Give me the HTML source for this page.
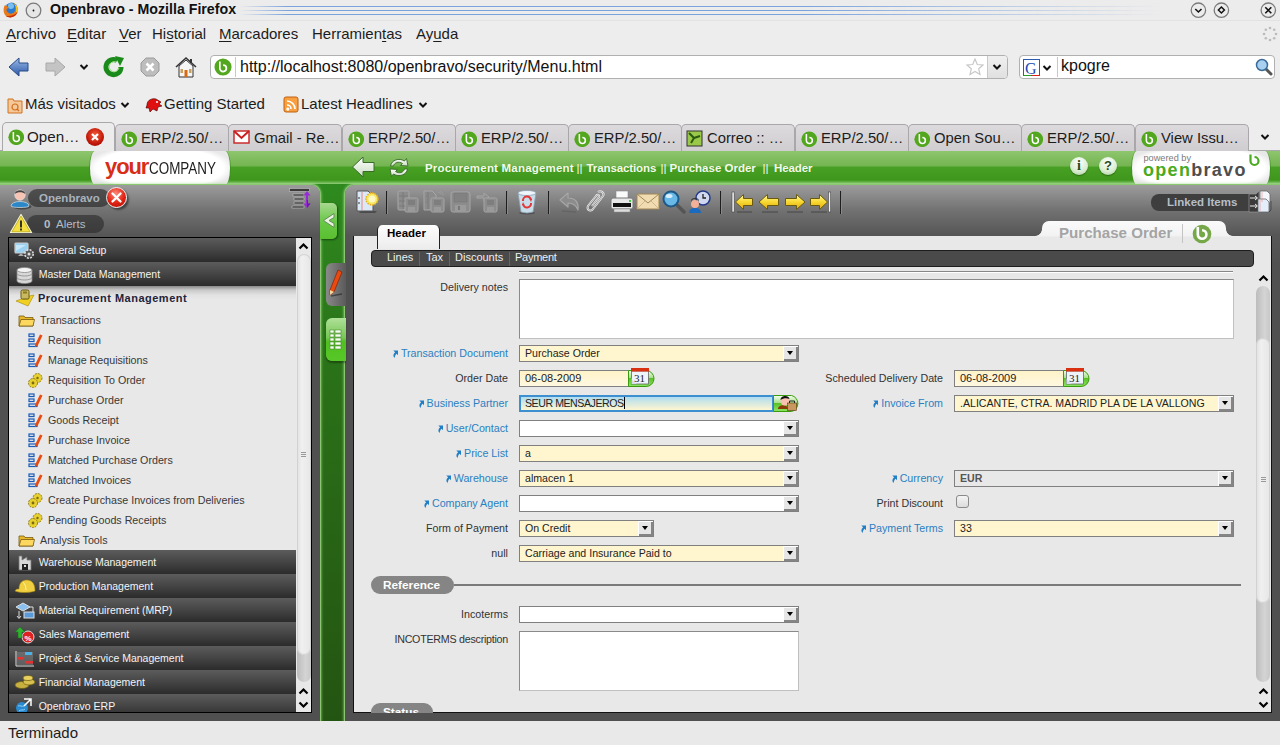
<!DOCTYPE html>
<html><head><meta charset="utf-8">
<style>
*{margin:0;padding:0;box-sizing:border-box}
html,body{width:1280px;height:745px;overflow:hidden;background:#ededed;font-family:"Liberation Sans",sans-serif}
.a{position:absolute}
.ff{font-size:15px;color:#1c1c1c;white-space:nowrap}
.u{text-decoration:underline;text-underline-offset:2px}
.tab{position:absolute;top:124px;height:27px;width:114px;background:linear-gradient(#dcdadc,#cfcdcf);border:1px solid #a9a7a9;border-bottom:none;border-radius:5px 5px 0 0}
.tab .t{position:absolute;left:25px;top:5px;font-size:14.8px;color:#1c1c1c;white-space:nowrap}
.bico{position:absolute;left:4.5px;top:5.5px;width:16.5px;height:16.5px}
</style></head>
<body>
<svg width="0" height="0" style="position:absolute"><defs><symbol id="ob" viewBox="0 0 16 16"><circle cx="8" cy="8" r="7.6" fill="#53a71f"/><path d="M5.2 3 V9.2 A2.9 2.9 0 1 0 8.1 6.3" fill="none" stroke="#fff" stroke-width="1.5"/></symbol></defs></svg>
<!-- Title bar -->
<div class="a" style="left:0;top:0;width:1280px;height:21px;background:#ececec;border-bottom:1px solid #e2e2e2"></div>
<svg class="a" style="left:1px;top:1px" width="17" height="17" viewBox="0 0 17 17"><circle cx="10.5" cy="7.5" r="6" fill="#2a7ad0"/><circle cx="10" cy="5" r="3" fill="#8ad0f8" opacity=".8"/><path d="M4 4 C2 7 2 12 5 15 C9 18 15 16 16.5 11 C17.5 7 15 3 13 2.5 C15 5 15 9 13 11.5 C10 14 6 12 5.5 9 C6 7.5 7 7 8 7 C7 6 6 5 4 4Z" fill="#e87a1a"/><path d="M5 15 C9 18 15 16 16.5 11 C14.5 14 9 15.5 5 15Z" fill="#c8300a"/><path d="M13 2.5 C15 3 17.5 7 16.5 11 L15 11 C15.5 8 15 5 13 2.5Z" fill="#f8c818"/></svg>
<svg class="a" style="left:25px;top:2px" width="17" height="17" viewBox="0 0 17 17"><circle cx="8.5" cy="8.5" r="7.3" fill="#e6e6e6" stroke="#7a7a7a" stroke-width="1.3"/><circle cx="8.5" cy="8.5" r=".9" fill="#111"/></svg>
<div class="a ff" style="left:50px;top:1px;font-weight:bold;font-size:14.2px;color:#111">Openbravo - Mozilla Firefox</div>
<div class="a" style="left:240px;top:5px;width:940px;height:11px;background:repeating-linear-gradient(#ececec 0 1px,#7aa2dc 1px 2px,#ececec 2px 4px);-webkit-mask:linear-gradient(90deg,transparent,#000 5%,#000 60%,transparent 98%)"></div>
<svg class="a" style="left:1188px;top:0px" width="92" height="21" viewBox="0 0 92 21">
<g fill="#ececec" stroke="#7a7a7a" stroke-width="1.3"><circle cx="10.4" cy="10.2" r="7.2"/><circle cx="33.4" cy="10.2" r="7.2"/><circle cx="80.3" cy="10.2" r="7.2"/></g>
<path d="M7.3 9 L10.4 12 L13.5 9" fill="none" stroke="#111" stroke-width="1.6"/>
<path d="M33.4 7 L36.4 10 L33.4 13 L30.4 10Z" fill="none" stroke="#111" stroke-width="1.5"/>
<path d="M77.3 7.2 L83.3 13.2 M83.3 7.2 L77.3 13.2" fill="none" stroke="#111" stroke-width="1.6"/>
</svg>
<!-- Menu bar -->
<div class="a ff" style="left:6px;top:25px"><span class="u">A</span>rchivo</div>
<div class="a ff" style="left:67px;top:25px"><span class="u">E</span>ditar</div>
<div class="a ff" style="left:119px;top:25px"><span class="u">V</span>er</div>
<div class="a ff" style="left:152px;top:25px">Hi<span class="u">s</span>torial</div>
<div class="a ff" style="left:219px;top:25px"><span class="u">M</span>arcadores</div>
<div class="a ff" style="left:312px;top:25px">Herramien<span class="u">t</span>as</div>
<div class="a ff" style="left:416px;top:25px">Ay<span class="u">u</span>da</div>

<!-- URL bar -->
<div class="a" style="left:210px;top:55px;width:798px;height:24px;background:#fff;border:1px solid #b0b0b0;border-radius:4px"></div>
<div class="a" style="left:235px;top:57px;width:1px;height:20px;background:#c8c8c8"></div>
<svg class="a" style="left:214px;top:58px" width="18" height="18"><use href="#ob"/></svg>
<div class="a ff" style="left:240px;top:58px;color:#111;font-size:16px">http://localhost:8080/openbravo/security/Menu.html</div>
<div class="a" style="left:987px;top:56px;width:20px;height:22px;background:linear-gradient(#f0f0f0,#e0e0e0);border-left:1px solid #c8c8c8;border-radius:0 3px 3px 0"></div>
<!-- search bar -->
<div class="a" style="left:1019px;top:55px;width:256px;height:24px;background:#fff;border:1px solid #b0b0b0;border-radius:4px"></div>
<div class="a" style="left:1057px;top:57px;width:1px;height:20px;background:#c8c8c8"></div>
<svg class="a" style="left:1023px;top:59px" width="17" height="17" viewBox="0 0 17 17"><rect x="0.5" y="0.5" width="16" height="16" fill="#fff" stroke="#2a5ab0"/><path d="M0.5 16.5 H16.5 V0.5" fill="none" stroke="#d82020"/><path d="M0.5 16.5 H8" stroke="#2a9a2a"/><text x="2" y="14.5" font-family="Liberation Serif" font-size="16" fill="#1a4ab8">G</text></svg>

<div class="a ff" style="left:1061px;top:57px;color:#111;font-size:16px">kpogre</div>
<!-- Nav toolbar -->

<svg class="a" style="left:8px;top:57px" width="22" height="20" viewBox="0 0 22 20"><defs><linearGradient id="bg1" x1="0" y1="0" x2="0" y2="1"><stop offset="0" stop-color="#9cbce8"/><stop offset="1" stop-color="#2a58a8"/></linearGradient></defs><path d="M1 10 L11 1 V6 H20 V14 H11 V19Z" fill="url(#bg1)" stroke="#2a4a88" stroke-width="1" stroke-linejoin="round"/></svg>
<svg class="a" style="left:44px;top:57px" width="22" height="20" viewBox="0 0 22 20"><path d="M21 10 L11 1 V6 H2 V14 H11 V19Z" fill="#c4c4c4" stroke="#a8a8a8" stroke-width="1" stroke-linejoin="round"/></svg>
<svg class="a" style="left:79px;top:63px" width="10" height="8"><path d="M1.5 2 L5 5.5 L8.5 2" fill="none" stroke="#111" stroke-width="2"/></svg>
<svg class="a" style="left:103px;top:56px" width="22" height="22" viewBox="0 0 22 22"><path d="M18 11 A7.5 7.5 0 1 1 14 4.5" fill="none" stroke="#1a8a1a" stroke-width="5"/><path d="M12 0 L21 2 L17 10Z" fill="#1a8a1a"/><path d="M16 12 A5 5 0 1 1 13 6" fill="none" stroke="#9ae07a" stroke-width="1"/></svg>
<svg class="a" style="left:140px;top:57px" width="20" height="20" viewBox="0 0 20 20"><path d="M6 1 H14 L19 6 V14 L14 19 H6 L1 14 V6Z" fill="#bdbdbd" stroke="#9a9a9a"/><path d="M6.5 6.5 L13.5 13.5 M13.5 6.5 L6.5 13.5" stroke="#fff" stroke-width="2.6"/></svg>
<svg class="a" style="left:175px;top:56px" width="22" height="22" viewBox="0 0 22 22"><path d="M1 11 L11 2 L21 11" fill="none" stroke="#333" stroke-width="1.6"/><path d="M4 10 L11 4 L18 10 V21 H4Z" fill="#f6f6f6" stroke="#333" stroke-width="1"/><rect x="9.5" y="14" width="3" height="7" fill="#d86a10"/><rect x="5.5" y="13" width="2.5" height="4" fill="#c8a060"/><rect x="14" y="13" width="2.5" height="4" fill="#c8a060"/><rect x="15" y="3" width="2" height="4" fill="#333"/></svg>
<!-- URL dropdown chevron & star -->
<svg class="a" style="left:992px;top:63px" width="10" height="8"><path d="M1.5 2 L5 5.5 L8.5 2" fill="none" stroke="#111" stroke-width="2"/></svg>
<svg class="a" style="left:966px;top:58px" width="18" height="18" viewBox="0 0 18 18"><path d="M9 1 L11.3 6.5 L17 7 L12.7 10.8 L14 16.5 L9 13.5 L4 16.5 L5.3 10.8 L1 7 L6.7 6.5Z" fill="#fff" stroke="#c8c8c8" stroke-width="1.2"/></svg>
<svg class="a" style="left:1042px;top:64px" width="10" height="8"><path d="M1.5 2 L5 5.5 L8.5 2" fill="none" stroke="#111" stroke-width="2"/></svg>
<svg class="a" style="left:1255px;top:58px" width="18" height="18" viewBox="0 0 18 18"><path d="M11 11 L16 16" stroke="#555" stroke-width="3" stroke-linecap="round"/><circle cx="7" cy="7" r="5.5" fill="#a8d0f0" stroke="#3a6a98" stroke-width="1.5"/></svg>
<!-- throbber -->
<svg class="a" style="left:1262px;top:26px" width="16" height="16" viewBox="0 0 16 16"><g fill="#bbb"><circle cx="8" cy="2" r="1.3"/><circle cx="12.2" cy="3.8" r="1.3"/><circle cx="14" cy="8" r="1.3"/><circle cx="12.2" cy="12.2" r="1.3"/><circle cx="8" cy="14" r="1.3"/><circle cx="3.8" cy="12.2" r="1.3"/><circle cx="2" cy="8" r="1.3"/><circle cx="3.8" cy="3.8" r="1.3"/></g></svg>
<!-- bookmarks icons -->
<svg class="a" style="left:7px;top:97px" width="16" height="17" viewBox="0 0 16 17"><path d="M1 2 H6 L7 4 H15 V16 H1Z" fill="#f4c898" stroke="#d07020" stroke-width="1"/><circle cx="8" cy="10" r="3" fill="none" stroke="#d07020" stroke-width="1.2"/><path d="M10 12 L12 14" stroke="#d07020" stroke-width="1.4"/></svg>
<svg class="a" style="left:120px;top:101px" width="10" height="8"><path d="M1.5 2 L5 5.5 L8.5 2" fill="none" stroke="#111" stroke-width="2"/></svg>
<svg class="a" style="left:145px;top:97px" width="18" height="16" viewBox="0 0 18 16"><path d="M2 8 C2 3 7 1 11 2 L16 5 L14 7 L17 9 L13 10 L12 14 L8 12 L5 15 L4 11 L1 11Z" fill="#e01010" stroke="#400" stroke-width=".6"/><circle cx="12" cy="5" r="1" fill="#fff"/></svg>
<svg class="a" style="left:283px;top:96px" width="16" height="17" viewBox="0 0 16 17"><rect x="1" y="1" width="14" height="15" rx="2" fill="#f8a040" stroke="#c06010"/><path d="M4 13 A0.8 0.8 0 1 1 4 13.1 M4 9 A4 4 0 0 1 8 13 M4 5 A8 8 0 0 1 12 13" fill="none" stroke="#fff" stroke-width="1.6"/></svg>
<svg class="a" style="left:418px;top:101px" width="10" height="8"><path d="M1.5 2 L5 5.5 L8.5 2" fill="none" stroke="#111" stroke-width="2"/></svg>
<!-- tab close & tab list --><div style="position:absolute;left:0;top:0;z-index:5">
<div class="a" style="left:86px;top:128px;width:18px;height:18px;border-radius:50%;background:radial-gradient(circle at 50% 40%,#f86040,#c01808 60%,#900);"></div>
<svg class="a" style="left:86px;top:128px" width="18" height="18"><path d="M6 6 L12 12 M12 6 L6 12" stroke="#fff" stroke-width="2.2"/></svg>
<svg class="a" style="left:1260px;top:133px" width="10" height="8"><path d="M1.5 2 L5 5.5 L8.5 2" fill="none" stroke="#111" stroke-width="2"/></svg>
<svg class="a" style="left:233px;top:130px" width="17" height="14" viewBox="0 0 17 14"><rect x="1" y="1" width="15" height="12" fill="#fff" stroke="#c82020" stroke-width="1.4"/><path d="M1 1 L8.5 8 L16 1" fill="none" stroke="#c82020" stroke-width="2"/></svg>
<svg class="a" style="left:686px;top:130px" width="17" height="17" viewBox="0 0 17 17"><rect x="1" y="1" width="15" height="15" fill="#9ac848" stroke="#333"/><path d="M3 3 L8 8 L5 13 M8 8 L14 6" stroke="#2a5a10" stroke-width="2" fill="none"/></svg></div>


<!-- Bookmarks -->
<div class="a ff" style="left:25px;top:95px">Más visitados</div>
<div class="a ff" style="left:164px;top:95px">Getting Started</div>
<div class="a ff" style="left:301px;top:95px">Latest Headlines</div>

<!-- Tabs -->
<div class="a" style="left:0;top:150px;width:1280px;height:1px;background:#a9a7a9"></div>
<div class="a" style="left:2px;top:122px;height:30px;width:113px;background:#ececec;border:1px solid #a9a7a9;border-bottom:none;border-radius:5px 5px 0 0"><svg class="bico"><use href="#ob"/></svg><div class="t" style="position:absolute;left:24px;top:5px;font-size:15.2px;color:#1c1c1c">Open…</div></div>
<div class="tab" style="left:115px"><svg class="bico"><use href="#ob"/></svg><div class="t">ERP/2.50/…</div></div>
<div class="tab" style="left:228px"><div class="t">Gmail - Re…</div></div>
<div class="tab" style="left:342px"><svg class="bico"><use href="#ob"/></svg><div class="t">ERP/2.50/…</div></div>
<div class="tab" style="left:455px"><svg class="bico"><use href="#ob"/></svg><div class="t">ERP/2.50/…</div></div>
<div class="tab" style="left:568px"><svg class="bico"><use href="#ob"/></svg><div class="t">ERP/2.50/…</div></div>
<div class="tab" style="left:681px"><div class="t">Correo :: …</div></div>
<div class="tab" style="left:795px"><svg class="bico"><use href="#ob"/></svg><div class="t">ERP/2.50/…</div></div>
<div class="tab" style="left:908px"><svg class="bico"><use href="#ob"/></svg><div class="t">Open Sou…</div></div>
<div class="tab" style="left:1021px"><svg class="bico"><use href="#ob"/></svg><div class="t">ERP/2.50/…</div></div>
<div class="tab" style="left:1135px"><svg class="bico"><use href="#ob"/></svg><div class="t">View Issu…</div></div>

<!-- APP -->

<!-- green header -->
<div class="a" style="left:0;top:151px;width:1280px;height:34px;background:linear-gradient(#8ec66e 0px,#74b450 15px,#48a024 16px,#3e961c 29px,#62b044 31px,#a8dc98 34px)"></div>
<!-- dark green under panels -->
<div class="a" style="left:0;top:184px;width:1280px;height:537px;background:linear-gradient(#2e8a1e,#2a7018 200px,#245412 537px)"></div>
<!-- logo pill -->
<div class="a" style="left:89px;top:151px;width:142px;height:34px;background:#3a8a20;border-radius:6px/17px;opacity:.6"></div>
<div class="a" style="left:90px;top:151px;width:140px;height:34px;background:radial-gradient(ellipse 75px 24px at 50% 50%,#fff 85%,#e8e8e8 100%);border-radius:5px/17px"></div>
<div class="a" style="left:105px;top:154px;font-size:22px;font-weight:bold;color:#d82e18;letter-spacing:-1.1px;white-space:nowrap;line-height:25px">your</div>
<div class="a" style="left:149px;top:159px;font-size:16px;color:#1e1e1e;white-space:nowrap;line-height:20px;transform:scaleX(.84);transform-origin:0 0">COMPANY</div>
<!-- back/refresh -->
<svg class="a" style="left:351px;top:155px" width="26" height="24" viewBox="0 0 26 24"><defs><linearGradient id="ga" x1="0" y1="0" x2="0" y2="1"><stop offset="0" stop-color="#ffffff"/><stop offset="1" stop-color="#c8dcc0"/></linearGradient></defs><path d="M1.5 12 L12 2 V7.5 H23 V16.5 H12 V22Z" fill="url(#ga)" stroke="#3a6a2a" stroke-width="1" stroke-linejoin="round"/></svg>
<svg class="a" style="left:387px;top:156px" width="24" height="23" viewBox="0 0 24 23"><g fill="url(#ga)" stroke="#3a6a2a" stroke-width=".9" stroke-linejoin="round"><path d="M3.5 10 C4.5 4 12 1.5 17.5 5 L19.5 2.5 L21 10 L13.5 9.5 L15.5 7.5 C11.5 5 7.5 6.5 6.5 10Z"/><path d="M20.5 13 C19.5 19 12 21.5 6.5 18 L4.5 20.5 L3 13 L10.5 13.5 L8.5 15.5 C12.5 18 16.5 16.5 17.5 13Z"/></g></svg>
<div style="position:absolute;top:162px;font:bold 11.5px 'Liberation Sans',sans-serif;color:#f4f8ec;white-space:nowrap;left:425px;letter-spacing:.2px">Procurement Management</div><div style="position:absolute;top:162px;font:11.5px 'Liberation Sans',sans-serif;color:#f4f8ec;white-space:nowrap;left:576.5px">||</div><div style="position:absolute;top:162px;font:bold 11.5px 'Liberation Sans',sans-serif;color:#f4f8ec;white-space:nowrap;left:586.5px;letter-spacing:-.1px">Transactions</div><div style="position:absolute;top:162px;font:11.5px 'Liberation Sans',sans-serif;color:#f4f8ec;white-space:nowrap;left:660.5px">||</div><div style="position:absolute;top:162px;font:bold 11.5px 'Liberation Sans',sans-serif;color:#f4f8ec;white-space:nowrap;left:669.5px">Purchase Order</div><div style="position:absolute;top:162px;font:11.5px 'Liberation Sans',sans-serif;color:#f4f8ec;white-space:nowrap;left:762.5px">||</div><div style="position:absolute;top:162px;font:bold 11.5px 'Liberation Sans',sans-serif;color:#f4f8ec;white-space:nowrap;left:774px;letter-spacing:-.1px">Header</div>
<!-- info/help -->
<div class="a" style="left:1070px;top:157px;width:18px;height:18px;border-radius:50%;background:radial-gradient(circle at 50% 30%,#fff,#d8ecd0 60%,#9cc090);box-shadow:0 1px 1px #2a6a10;font:bold 14px 'Liberation Serif',serif;color:#2a4a1a;text-align:center;line-height:18px">i</div>
<div class="a" style="left:1099px;top:157px;width:18px;height:18px;border-radius:50%;background:radial-gradient(circle at 50% 30%,#fff,#d8ecd0 60%,#9cc090);box-shadow:0 1px 1px #2a6a10;font:bold 13px 'Liberation Sans',sans-serif;color:#2a4a1a;text-align:center;line-height:18px">?</div>
<!-- powered by pill -->
<div class="a" style="left:1131px;top:151px;width:140px;height:34px;background:#3a8a20;border-radius:6px/17px;opacity:.6"></div>
<div class="a" style="left:1132px;top:151px;width:138px;height:34px;background:radial-gradient(ellipse 75px 24px at 50% 50%,#fff 85%,#e8e8e8 100%);border-radius:5px/17px"></div>
<div class="a" style="left:1143.5px;top:153px;font-size:9.2px;color:#7a7a7a;white-space:nowrap;line-height:11px">powered by</div>
<div class="a" style="left:1143px;top:159px;font-size:18px;font-weight:bold;color:#4aaa22;white-space:nowrap;letter-spacing:1.3px;line-height:22px">open<span style="color:#4e4e4e">bravo</span></div>
<svg class="a" style="left:1246px;top:153px" width="15" height="14" viewBox="0 0 15 14"><path d="M4.5 1.5 V8 A4 4 0 1 0 8.5 4" fill="none" stroke="#4aaa22" stroke-width="2.2"/></svg>
<!-- LEFT PANEL -->
<div class="a" style="left:0;top:185px;width:320px;height:536px;background:linear-gradient(#9c9c9c,#727272 25px,#565656 50px,#505050 80px);border-radius:0 9px 0 0;box-shadow:0 0 0 1px #8ac870,0 0 3px 1px #a8dc90"></div>
<!-- MAIN PANEL -->
<div class="a" style="left:345px;top:185px;width:935px;height:536px;background:linear-gradient(#9c9c9c,#727272 25px,#565656 50px,#505050 80px);border-radius:9px 0 0 0;box-shadow:0 0 0 1px #8ac870,0 0 3px 1px #a8dc90"></div>
<!-- green collapse tab -->
<div class="a" style="left:320px;top:203px;width:17px;height:36px;background:linear-gradient(#a8d890,#6ac848 50%,#5ac030);border-radius:0 5px 5px 0;box-shadow:1px 1px 2px #1a4a10"></div>
<svg class="a" style="left:321px;top:212px" width="15" height="17" viewBox="0 0 15 17"><path d="M13 1.5 L2.5 8.5 L13 15.5 L13 11.5 L8 8.5 L13 5.5Z" fill="#e8f4e0" stroke="#6a8a60" stroke-width="1" stroke-linejoin="round"/></svg>




<!-- side tabs on main panel -->
<div class="a" style="left:326px;top:263px;width:20px;height:43px;background:linear-gradient(90deg,#8a8a8a,#5a5a5a);border-radius:6px 0 0 6px"></div>
<svg class="a" style="left:328px;top:268px" width="16" height="32" viewBox="0 0 16 32"><path d="M3 28 L14 26" stroke="#222" stroke-width="1.5" opacity=".6"/><path d="M10 2 L14 4 L6 24 L2 27 L2 22Z" fill="#e84a10" stroke="#8a2008" stroke-width=".7"/><path d="M2 22 L6 24 L2 27Z" fill="#f0d8a0"/></svg>
<div class="a" style="left:326px;top:318px;width:20px;height:43px;background:linear-gradient(#b0e098,#78c858 45%,#50c020 55%,#58c828);border-radius:6px 0 0 6px;box-shadow:0 2px 2px rgba(0,0,0,.35)"></div>
<svg class="a" style="left:329px;top:329px" width="13" height="21" viewBox="0 0 13 21"><g fill="#f4fff0" stroke="#4a8a30" stroke-width=".6"><rect x="1" y="1" width="4" height="3"/><rect x="6" y="1" width="6" height="3"/><rect x="1" y="5" width="4" height="3"/><rect x="6" y="5" width="6" height="3"/><rect x="1" y="9" width="4" height="3"/><rect x="6" y="9" width="6" height="3"/><rect x="1" y="13" width="4" height="3"/><rect x="6" y="13" width="6" height="3"/><rect x="1" y="17" width="4" height="3"/><rect x="6" y="17" width="6" height="3"/></g></svg>

<!-- SIDEBAR CONTENT -->
<!-- user -->
<div class="a" style="left:28px;top:189px;width:82px;height:18px;border-radius:9px;background:rgba(35,35,35,.62)"></div>
<div class="a" style="left:39px;top:192px;font:bold 11.5px 'Liberation Sans',sans-serif;color:#a9b2bc;white-space:nowrap">Openbravo</div>
<svg class="a" style="left:10px;top:187px" width="23" height="23" viewBox="0 0 23 23"><ellipse cx="12" cy="19.5" rx="9.5" ry="3" fill="#222" opacity=".55"/><path d="M1 19 C1 13 19 13 19 19 C19 21 1 21 1 19Z" fill="#2a88c8" stroke="#e0e0e0" stroke-width=".7"/><circle cx="10" cy="8" r="5.3" fill="#f6c4b4" stroke="#ddd" stroke-width=".6"/><path d="M4.8 7 C5 2 15 2 15.2 7 C13 4.5 7 4.5 4.8 7Z" fill="#444"/></svg>
<div class="a" style="left:106px;top:187px;width:21px;height:21px;border-radius:50%;background:radial-gradient(circle at 45% 30%,#ff8a7a,#e02010 55%,#a81008);border:1px solid #eee;box-shadow:2px 2px 2px rgba(0,0,0,.45)"></div>
<svg class="a" style="left:106px;top:187px" width="21" height="21"><path d="M6.5 6.5 L14.5 14.5 M14.5 6.5 L6.5 14.5" stroke="#fff" stroke-width="2.4" stroke-linecap="round"/></svg>
<!-- sort icon -->
<svg class="a" style="left:288px;top:187px" width="24" height="24" viewBox="0 0 24 24"><g fill="#3a3a3a" stroke="#c8c8c8" stroke-width=".6"><rect x="1.5" y="1.5" width="20" height="3"/><rect x="5" y="7" width="11" height="2"/><rect x="6" y="11" width="10" height="2"/><rect x="6" y="15" width="10" height="2"/><rect x="4" y="19" width="12" height="2"/></g><path d="M19 4 L15.5 8.5 H18 V16.5 H15.5 L19 21 L22.5 16.5 H20 V8.5 H22.5Z" fill="#9a2ad8"/><path d="M19 13 L19 21 L22.5 16.5 H20 V13Z" fill="#6a1aa8"/></svg>
<!-- alerts -->
<div class="a" style="left:27px;top:215px;width:77px;height:18px;border-radius:9px;background:rgba(35,35,35,.55)"></div>
<svg class="a" style="left:9px;top:213px" width="24" height="21" viewBox="0 0 24 21"><path d="M12 1.5 L22.5 19.5 H1.5 Z" fill="#f4e040" stroke="#f8f4d0" stroke-width="1.2" stroke-linejoin="round"/><path d="M12 3 L21 18.8 H3 Z" fill="none" stroke="#a8981a" stroke-width=".6"/><rect x="11" y="7.5" width="2" height="7" fill="#333"/><rect x="11" y="15.5" width="2" height="2" fill="#333"/></svg>
<div class="a" style="left:44px;top:218px;font:bold 11.5px 'Liberation Sans',sans-serif;color:#b4bcc4">0</div>
<div class="a" style="left:56px;top:218px;font:11.5px 'Liberation Sans',sans-serif;color:#b4bcc4">Alerts</div>

<!-- list box -->
<div class="a" style="left:8px;top:237px;width:304px;height:476px;border:1px solid #000;background:#e8e8e8;overflow:hidden">
<div class="a" style="left:0;top:0px;width:287px;height:24px;background:linear-gradient(#5c5c5c,#474747 45%,#2b2b2b)"></div><svg class="a" style="left:5px;top:4px" width="21" height="18" viewBox="0 0 21 18"><rect x="1" y="1" width="13" height="10" rx="1" fill="#9ad0f0" stroke="#ccc" stroke-width="1.2"/><path d="M2 3 L12 3 L2 9Z" fill="#d8f0fc" opacity=".7"/><path d="M4 14 H10 L7 11Z" fill="#aaa"/><circle cx="15" cy="12" r="4.2" fill="#555" stroke="#ddd" stroke-width="1.6" stroke-dasharray="2 1.3"/><circle cx="15" cy="12" r="1.5" fill="#ddd"/></svg><div class="a" style="left:29.7px;top:6px;font:10.5px 'Liberation Sans',sans-serif;color:#f4f4f4;white-space:nowrap">General Setup</div>
<div class="a" style="left:0;top:24px;width:287px;height:24px;background:linear-gradient(#5c5c5c,#474747 45%,#2b2b2b)"></div><svg class="a" style="left:6px;top:28px" width="19" height="18" viewBox="0 0 19 18"><g fill="#d8d8d8" stroke="#888" stroke-width=".8"><path d="M2 12 V15 A7.5 2.5 0 0 0 17 15 V12"/><path d="M2 8 V11.5 A7.5 2.5 0 0 0 17 11.5 V8"/><path d="M2 4 V7.5 A7.5 2.5 0 0 0 17 7.5 V4"/><ellipse cx="9.5" cy="4" rx="7.5" ry="2.5" fill="#f4f4f4"/></g></svg><div class="a" style="left:29.7px;top:30px;font:10.5px 'Liberation Sans',sans-serif;color:#f4f4f4;white-space:nowrap">Master Data Management</div>
<div class="a" style="left:0;top:312px;width:287px;height:24px;background:linear-gradient(#5c5c5c,#474747 45%,#2b2b2b)"></div><svg class="a" style="left:8px;top:316px" width="16" height="18" viewBox="0 0 16 18"><path d="M2 2 H5 V6 L10 3 V6 H14 V16 H2Z" fill="#d8d8d8" stroke="#777" stroke-width=".8"/><rect x="5" y="10" width="6" height="6" fill="#222"/><rect x="7" y="11" width="2" height="2" fill="#ddd"/></svg><div class="a" style="left:29.7px;top:318px;font:10.5px 'Liberation Sans',sans-serif;color:#f4f4f4;white-space:nowrap">Warehouse Management</div>
<div class="a" style="left:0;top:336px;width:287px;height:24px;background:linear-gradient(#5c5c5c,#474747 45%,#2b2b2b)"></div><svg class="a" style="left:5px;top:340px" width="22" height="16" viewBox="0 0 22 16"><path d="M1 13 C2 11 3 11 5 11 C5 4 9 2 13 2 C18 2 21 6 21 12 L21 13 C15 15 6 15 1 13Z" fill="#f0d040" stroke="#a08010" stroke-width=".6"/><path d="M9 4 C11 6 12 9 12 12" stroke="#fff4a0" fill="none"/></svg><div class="a" style="left:29.7px;top:342px;font:10.5px 'Liberation Sans',sans-serif;color:#f4f4f4;white-space:nowrap">Production Management</div>
<div class="a" style="left:0;top:360px;width:287px;height:24px;background:linear-gradient(#5c5c5c,#474747 45%,#2b2b2b)"></div><svg class="a" style="left:5px;top:364px" width="22" height="18" viewBox="0 0 22 18"><path d="M9 1 L16 5 L9 9 L2 5Z" fill="#8ac0f0" stroke="#ddd" stroke-width="1"/><path d="M5 9 V16 M3 14 L5 16.5 L7 14" stroke="#ddd" fill="none" stroke-width="1"/><path d="M16 5 H19 V10" stroke="#ddd" fill="none"/><rect x="10" y="10" width="10" height="6" fill="#5a9ad8" stroke="#ddd" stroke-width="1"/></svg><div class="a" style="left:29.7px;top:366px;font:10.5px 'Liberation Sans',sans-serif;color:#f4f4f4;white-space:nowrap">Material Requirement (MRP)</div>
<div class="a" style="left:0;top:384px;width:287px;height:24px;background:linear-gradient(#5c5c5c,#474747 45%,#2b2b2b)"></div><svg class="a" style="left:5px;top:388px" width="22" height="18" viewBox="0 0 22 18"><circle cx="14" cy="11" r="6" fill="#e02020" stroke="#ddd" stroke-width="1"/><text x="10.5" y="14.5" font-size="8" font-family="Liberation Sans" font-weight="bold" fill="#fff">%</text><path d="M6 1 L11 6 H8 V12 H4 V6 H1Z" fill="#30b030" stroke="#1a6a1a" stroke-width=".5"/></svg><div class="a" style="left:29.7px;top:390px;font:10.5px 'Liberation Sans',sans-serif;color:#f4f4f4;white-space:nowrap">Sales Management</div>
<div class="a" style="left:0;top:408px;width:287px;height:24px;background:linear-gradient(#5c5c5c,#474747 45%,#2b2b2b)"></div><svg class="a" style="left:5px;top:412px" width="21" height="18" viewBox="0 0 21 18"><path d="M2 1 V16 H20" stroke="#ddd" fill="none" stroke-width="1"/><rect x="3" y="2" width="16" height="13" fill="#888" opacity=".5"/><rect x="11" y="2" width="7" height="3" fill="#4ab0e8"/><rect x="3" y="7" width="7" height="2.5" fill="#e83030"/><rect x="11" y="11" width="8" height="2.5" fill="#e83030"/></svg><div class="a" style="left:29.7px;top:414px;font:10.5px 'Liberation Sans',sans-serif;color:#f4f4f4;white-space:nowrap">Project &amp; Service Management</div>
<div class="a" style="left:0;top:432px;width:287px;height:24px;background:linear-gradient(#5c5c5c,#474747 45%,#2b2b2b)"></div><svg class="a" style="left:5px;top:436px" width="22" height="16" viewBox="0 0 22 16"><ellipse cx="8" cy="11" rx="7" ry="3.5" fill="#c8b040" stroke="#6a5a10" stroke-width=".7"/><ellipse cx="15" cy="8" rx="6" ry="3" fill="#d8c050" stroke="#6a5a10" stroke-width=".7"/><ellipse cx="14" cy="4" rx="5" ry="2.5" fill="#e8d060" stroke="#6a5a10" stroke-width=".7"/></svg><div class="a" style="left:29.7px;top:438px;font:10.5px 'Liberation Sans',sans-serif;color:#f4f4f4;white-space:nowrap">Financial Management</div>
<div class="a" style="left:0;top:456px;width:287px;height:24px;background:linear-gradient(#5c5c5c,#474747 45%,#2b2b2b)"></div><svg class="a" style="left:6px;top:460px" width="18" height="16" viewBox="0 0 18 16"><circle cx="7" cy="10" r="6" fill="#2a8ad0"/><path d="M3 8 C5 7 7 9 9 8 M4 13 C6 11 8 13 10 11" stroke="#8ad0f8" fill="none"/><path d="M9 1 H16 V8 M16 1 L9 8" stroke="#fff" stroke-width="1.5" fill="none"/></svg><div class="a" style="left:29.7px;top:462px;font:10.5px 'Liberation Sans',sans-serif;color:#f4f4f4;white-space:nowrap">Openbravo ERP</div>
<div class="a" style="left:0;top:48px;width:287px;height:24px;background:linear-gradient(#8a8a8a 0px,#c8c8c8 4px,#e2e2e2 9px,#e8e8e8 14px)"></div><svg class="a" style="left:6px;top:51px" width="20" height="18" viewBox="0 0 20 18"><path d="M1 12 L13 17 L19 6 L14 7 L14 10 L6 10Z" fill="#f0d020" stroke="#a08810" stroke-width=".6"/><rect x="6" y="1" width="8" height="9" rx="1.5" fill="#c8b860" stroke="#6a5a10"/><rect x="8" y="2.5" width="4" height="2" fill="#8a7a20"/></svg><div class="a" style="left:29px;top:54px;font:bold 11px 'Liberation Sans',sans-serif;letter-spacing:.5px;color:#23233a;white-space:nowrap">Procurement Management</div>
<svg class="a" style="left:9px;top:76px" width="17" height="13" viewBox="0 0 17 13"><path d="M1 2 H6 L7 3.5 H15 V12 H1Z" fill="#e8b828" stroke="#7a5a10" stroke-width=".8"/><path d="M1 12 L3 5.5 H16.5 L15 12Z" fill="#fcd860" stroke="#7a5a10" stroke-width=".8"/></svg><div class="a" style="left:31px;top:76px;font:10.7px 'Liberation Sans',sans-serif;color:#383838;white-space:nowrap">Transactions</div>
<svg class="a" style="left:19px;top:95px" width="16" height="15" viewBox="0 0 16 15"><g fill="none" stroke="#1a5ab8" stroke-width="1.2"><rect x="1" y="1" width="5" height="2.5"/><rect x="1" y="6" width="5" height="2.5"/><rect x="1" y="11" width="8" height="2.5"/></g><path d="M7 12 L12 1.5 L14.5 2.5 L9.5 13 L7 14Z" fill="#e84a10"/></svg><div class="a" style="left:39px;top:96px;font:10.7px 'Liberation Sans',sans-serif;color:#383838;white-space:nowrap">Requisition</div>
<svg class="a" style="left:19px;top:115px" width="16" height="15" viewBox="0 0 16 15"><g fill="none" stroke="#1a5ab8" stroke-width="1.2"><rect x="1" y="1" width="5" height="2.5"/><rect x="1" y="6" width="5" height="2.5"/><rect x="1" y="11" width="8" height="2.5"/></g><path d="M7 12 L12 1.5 L14.5 2.5 L9.5 13 L7 14Z" fill="#e84a10"/></svg><div class="a" style="left:39px;top:116px;font:10.7px 'Liberation Sans',sans-serif;color:#383838;white-space:nowrap">Manage Requisitions</div>
<svg class="a" style="left:18px;top:134px" width="17" height="17" viewBox="0 0 17 17"><circle cx="10.5" cy="6" r="4.5" fill="#e8d030" stroke="#7a6a10" stroke-width=".8" stroke-dasharray="2 1"/><circle cx="6" cy="11" r="4.5" fill="#e8d030" stroke="#7a6a10" stroke-width=".8" stroke-dasharray="2 1"/><circle cx="6" cy="11" r="1.4" fill="#7a6a10"/><circle cx="10.5" cy="6" r="1.2" fill="#7a6a10"/></svg><div class="a" style="left:39px;top:136px;font:10.7px 'Liberation Sans',sans-serif;color:#383838;white-space:nowrap">Requisition To Order</div>
<svg class="a" style="left:19px;top:155px" width="16" height="15" viewBox="0 0 16 15"><g fill="none" stroke="#1a5ab8" stroke-width="1.2"><rect x="1" y="1" width="5" height="2.5"/><rect x="1" y="6" width="5" height="2.5"/><rect x="1" y="11" width="8" height="2.5"/></g><path d="M7 12 L12 1.5 L14.5 2.5 L9.5 13 L7 14Z" fill="#e84a10"/></svg><div class="a" style="left:39px;top:156px;font:10.7px 'Liberation Sans',sans-serif;color:#383838;white-space:nowrap">Purchase Order</div>
<svg class="a" style="left:19px;top:175px" width="16" height="15" viewBox="0 0 16 15"><g fill="none" stroke="#1a5ab8" stroke-width="1.2"><rect x="1" y="1" width="5" height="2.5"/><rect x="1" y="6" width="5" height="2.5"/><rect x="1" y="11" width="8" height="2.5"/></g><path d="M7 12 L12 1.5 L14.5 2.5 L9.5 13 L7 14Z" fill="#e84a10"/></svg><div class="a" style="left:39px;top:176px;font:10.7px 'Liberation Sans',sans-serif;color:#383838;white-space:nowrap">Goods Receipt</div>
<svg class="a" style="left:19px;top:195px" width="16" height="15" viewBox="0 0 16 15"><g fill="none" stroke="#1a5ab8" stroke-width="1.2"><rect x="1" y="1" width="5" height="2.5"/><rect x="1" y="6" width="5" height="2.5"/><rect x="1" y="11" width="8" height="2.5"/></g><path d="M7 12 L12 1.5 L14.5 2.5 L9.5 13 L7 14Z" fill="#e84a10"/></svg><div class="a" style="left:39px;top:196px;font:10.7px 'Liberation Sans',sans-serif;color:#383838;white-space:nowrap">Purchase Invoice</div>
<svg class="a" style="left:19px;top:215px" width="16" height="15" viewBox="0 0 16 15"><g fill="none" stroke="#1a5ab8" stroke-width="1.2"><rect x="1" y="1" width="5" height="2.5"/><rect x="1" y="6" width="5" height="2.5"/><rect x="1" y="11" width="8" height="2.5"/></g><path d="M7 12 L12 1.5 L14.5 2.5 L9.5 13 L7 14Z" fill="#e84a10"/></svg><div class="a" style="left:39px;top:216px;font:10.7px 'Liberation Sans',sans-serif;color:#383838;white-space:nowrap">Matched Purchase Orders</div>
<svg class="a" style="left:19px;top:235px" width="16" height="15" viewBox="0 0 16 15"><g fill="none" stroke="#1a5ab8" stroke-width="1.2"><rect x="1" y="1" width="5" height="2.5"/><rect x="1" y="6" width="5" height="2.5"/><rect x="1" y="11" width="8" height="2.5"/></g><path d="M7 12 L12 1.5 L14.5 2.5 L9.5 13 L7 14Z" fill="#e84a10"/></svg><div class="a" style="left:39px;top:236px;font:10.7px 'Liberation Sans',sans-serif;color:#383838;white-space:nowrap">Matched Invoices</div>
<svg class="a" style="left:18px;top:254px" width="17" height="17" viewBox="0 0 17 17"><circle cx="10.5" cy="6" r="4.5" fill="#e8d030" stroke="#7a6a10" stroke-width=".8" stroke-dasharray="2 1"/><circle cx="6" cy="11" r="4.5" fill="#e8d030" stroke="#7a6a10" stroke-width=".8" stroke-dasharray="2 1"/><circle cx="6" cy="11" r="1.4" fill="#7a6a10"/><circle cx="10.5" cy="6" r="1.2" fill="#7a6a10"/></svg><div class="a" style="left:39px;top:256px;font:10.7px 'Liberation Sans',sans-serif;color:#383838;white-space:nowrap">Create Purchase Invoices from Deliveries</div>
<svg class="a" style="left:18px;top:274px" width="17" height="17" viewBox="0 0 17 17"><circle cx="10.5" cy="6" r="4.5" fill="#e8d030" stroke="#7a6a10" stroke-width=".8" stroke-dasharray="2 1"/><circle cx="6" cy="11" r="4.5" fill="#e8d030" stroke="#7a6a10" stroke-width=".8" stroke-dasharray="2 1"/><circle cx="6" cy="11" r="1.4" fill="#7a6a10"/><circle cx="10.5" cy="6" r="1.2" fill="#7a6a10"/></svg><div class="a" style="left:39px;top:276px;font:10.7px 'Liberation Sans',sans-serif;color:#383838;white-space:nowrap">Pending Goods Receipts</div>
<svg class="a" style="left:9px;top:296px" width="17" height="13" viewBox="0 0 17 13"><path d="M1 2 H6 L7 3.5 H15 V12 H1Z" fill="#e8b828" stroke="#7a5a10" stroke-width=".8"/><path d="M1 12 L3 5.5 H16.5 L15 12Z" fill="#fcd860" stroke="#7a5a10" stroke-width=".8"/></svg><div class="a" style="left:31px;top:296px;font:10.7px 'Liberation Sans',sans-serif;color:#383838;white-space:nowrap">Analysis Tools</div>
<div class="a" style="left:287px;top:0;width:15px;height:474px;background:#e8e8e8"></div><svg class="a" style="left:288px;top:4px" width="13" height="9"><path d="M2.5 6.5 L6.5 2.5 L10.5 6.5" fill="none" stroke="#000" stroke-width="2.2"/></svg><div class="a" style="left:288px;top:380px;width:14px;height:64px;background:linear-gradient(90deg,#bcbcbc,#d4d4d4 60%,#c8c8c8);border-radius:0 0 7px 7px"></div><div class="a" style="left:288px;top:16px;width:14px;height:401px;background:linear-gradient(90deg,#e0e0e0,#f0f0f0 35%,#e6e6e6);border-radius:7px;box-shadow:inset 0 0 0 1px #d2d2d2"></div><svg class="a" style="left:288px;top:449px" width="13" height="9"><path d="M2.5 6.5 L6.5 2.5 L10.5 6.5" fill="none" stroke="#000" stroke-width="2.2"/></svg><svg class="a" style="left:288px;top:462px" width="13" height="9"><path d="M2.5 2.5 L6.5 6.5 L10.5 2.5" fill="none" stroke="#000" stroke-width="2.2"/></svg><div class="a" style="left:292px;top:214px;width:5px;height:1px;background:#999;box-shadow:0 2px 0 #999,0 4px 0 #999"></div>
</div>

<!-- MAIN CONTENT -->
<style>
.lb{position:absolute;font-size:10.7px;color:#333;white-space:nowrap;text-align:right}
.lk{color:#2a80c2}
.ar{display:inline-block;width:6px;height:8px;margin-right:3px;vertical-align:-1px}
.fld{position:absolute;height:17px;border:1px solid #808080;background:#fff6cf;font-size:10.6px;color:#222;padding:1px 0 0 5px;white-space:nowrap;overflow:hidden}
.wh{background:#fff}
.ro{background:#e8e8e8}
.dd{position:absolute;right:0;top:0;width:15px;height:15px;background:#e6e6e6;border-top:1px solid #fff;border-left:1px solid #fff;box-shadow:inset -2px -2px 0 #858585}
.dd:after{content:"";position:absolute;left:3px;top:4px;border-left:3.5px solid transparent;border-right:3.5px solid transparent;border-top:4px solid #000}
</style>
<!-- toolbar -->

<div class="a" style="left:386px;top:191px;width:2px;height:23px;background:#1e1e1e;border-right:1px solid #8a8a8a"></div>
<div class="a" style="left:506px;top:191px;width:2px;height:23px;background:#1e1e1e;border-right:1px solid #8a8a8a"></div>
<div class="a" style="left:548px;top:191px;width:2px;height:23px;background:#1e1e1e;border-right:1px solid #8a8a8a"></div>
<div class="a" style="left:720px;top:191px;width:2px;height:23px;background:#1e1e1e;border-right:1px solid #8a8a8a"></div>
<div class="a" style="left:840px;top:191px;width:2px;height:23px;background:#1e1e1e;border-right:1px solid #8a8a8a"></div>
<!-- new -->
<svg class="a" style="left:356px;top:190px" width="24" height="24" viewBox="0 0 24 24"><path d="M3 23 H19 L21 21 H5Z" fill="#333" opacity=".6"/><path d="M1 1 H12 L17 6 V21 H1Z" fill="#dce8f6" stroke="#555" stroke-width="1"/><line x1="6" y1="2" x2="6" y2="20" stroke="#e87070" stroke-width=".8"/><path d="M2 8 H4 M2 13 H4" stroke="#333"/><circle cx="16" cy="9" r="6" fill="#f8e860" stroke="#e8b020" stroke-width="1.5" stroke-dasharray="1.5 1"/><circle cx="16" cy="9" r="3.5" fill="#fff8c0"/></svg>
<!-- disabled -->
<svg class="a" style="left:397px;top:190px" width="24" height="24" viewBox="0 0 24 24"><g fill="#8c8c8c" stroke="#a6a6a6" stroke-width="1"><rect x="1" y="1" width="11" height="19" rx="1"/><rect x="8" y="8" width="13" height="14" rx="1.5"/></g><path d="M2 6 H11 M2 11 H8 M2 16 H8 M6 2 V19" stroke="#777" stroke-width=".8"/><rect x="11" y="10" width="7" height="5" fill="#7e7e7e"/><rect x="11" y="17" width="7" height="5" fill="#9a9a9a"/></svg>
<svg class="a" style="left:423px;top:190px" width="24" height="24" viewBox="0 0 24 24"><g fill="#8c8c8c" stroke="#a6a6a6" stroke-width="1"><path d="M1 1 H9 L13 5 V20 H1Z"/><rect x="8" y="8" width="13" height="14" rx="1.5"/></g><path d="M3 6 H4 M3 12 H4 M5 2 V19" stroke="#777" stroke-width=".8"/><path d="M15 2 L21 5 M17 1 L20 3" stroke="#9a9a9a"/><rect x="11" y="10" width="7" height="5" fill="#7e7e7e"/><rect x="11" y="17" width="7" height="5" fill="#9a9a9a"/></svg>
<svg class="a" style="left:450px;top:190px" width="22" height="24" viewBox="0 0 22 24"><rect x="1" y="2" width="19" height="20" rx="2" fill="#8c8c8c" stroke="#a6a6a6"/><rect x="4" y="3" width="13" height="9" fill="#828282" stroke="#777" stroke-width=".6"/><rect x="5" y="15" width="11" height="7" fill="#9a9a9a"/><rect x="8" y="16" width="2" height="4" fill="#777"/></svg>
<svg class="a" style="left:476px;top:190px" width="24" height="24" viewBox="0 0 24 24"><path d="M1 6 H8 V3 L13 7 L8 11 V8 H1Z" fill="#8c8c8c" stroke="#a6a6a6"/><rect x="8" y="8" width="13" height="14" rx="1.5" fill="#8c8c8c" stroke="#a6a6a6"/><rect x="11" y="10" width="7" height="5" fill="#7e7e7e"/><rect x="11" y="17" width="7" height="5" fill="#9a9a9a"/></svg>
<!-- trash -->
<svg class="a" style="left:516px;top:189px" width="22" height="26" viewBox="0 0 22 26"><ellipse cx="11" cy="24" rx="8" ry="1.5" fill="#333" opacity=".5"/><path d="M2 4 L5 23 Q11 25 17 23 L20 4Z" fill="#c8dcea" stroke="#8aa0b0" stroke-width=".8"/><ellipse cx="11" cy="4" rx="9" ry="2.5" fill="#eef6fc" stroke="#8aa0b0" stroke-width=".8"/><path d="M7 12 A4 4 0 0 1 15 11 M15 14 A4 4 0 0 1 7 15" fill="none" stroke="#e03838" stroke-width="2"/><path d="M13 9 L16 10 L15 13Z M9 17 L6 16 L7 13Z" fill="#e03838"/></svg>
<!-- undo -->
<svg class="a" style="left:558px;top:191px" width="24" height="23" viewBox="0 0 24 23"><path d="M10 2 L2 9 L10 16 V12 C15 12 18 14 20 19 C21 11 17 7 10 7Z" fill="#8c8c8c" stroke="#a6a6a6" stroke-width="1.2" stroke-linejoin="round"/><path d="M4 20 L18 21" stroke="#555" stroke-width="1.5" opacity=".4"/></svg>
<!-- clip -->
<svg class="a" style="left:583px;top:189px" width="24" height="26" viewBox="0 0 24 26"><path d="M15 3 C18 1 22 4 20 7 L10 20 C8 23 3 21 5 17 L13 7 C14 5 17 6 16 8 L9 17" fill="none" stroke="#f0f0f0" stroke-width="2"/><path d="M15 3 C18 1 22 4 20 7 L10 20 C8 23 3 21 5 17 L13 7 C14 5 17 6 16 8 L9 17" fill="none" stroke="#777" stroke-width=".6"/></svg>
<!-- printer -->
<svg class="a" style="left:610px;top:190px" width="24" height="24" viewBox="0 0 24 24"><rect x="6" y="1" width="12" height="8" fill="#fafafa" stroke="#888" stroke-width=".6"/><rect x="1" y="8" width="22" height="11" rx="2" fill="#e8e8e8" stroke="#777"/><rect x="3" y="13" width="18" height="4" fill="#111"/><rect x="19" y="10" width="2" height="2" fill="#4c4"/><rect x="4" y="19" width="16" height="3" fill="#ddd" stroke="#888" stroke-width=".5"/></svg>
<!-- mail -->
<svg class="a" style="left:636px;top:193px" width="24" height="18" viewBox="0 0 24 18"><rect x="1" y="1" width="22" height="15" fill="#f0dcb0" stroke="#a08858"/><path d="M1 1 L12 10 L23 1" fill="none" stroke="#a08858"/><path d="M1 16 L9 8 M23 16 L15 8" stroke="#c8b088" stroke-width=".8"/></svg>
<!-- search -->
<svg class="a" style="left:662px;top:190px" width="24" height="24" viewBox="0 0 24 24"><path d="M14 14 L22 22" stroke="#555" stroke-width="3.5" stroke-linecap="round"/><circle cx="9" cy="9" r="7.5" fill="#68b8e8" stroke="#1e5a88" stroke-width="2"/><ellipse cx="7" cy="6" rx="3.5" ry="2" fill="#d8f0fc"/></svg>
<!-- person clock -->
<svg class="a" style="left:688px;top:190px" width="24" height="24" viewBox="0 0 24 24"><circle cx="15" cy="8" r="7" fill="#d0d8f0" stroke="#223a88" stroke-width="1.5"/><path d="M15 4 V8 H18" stroke="#222" stroke-width="1.3" fill="none"/><path d="M1 23 C1 16 13 16 13 23Z" fill="#1a6ac0"/><circle cx="7" cy="14" r="4" fill="#f2b098"/><path d="M3 13 A4 4 0 0 1 11 13 L11 11 A4 3 0 0 0 3 11Z" fill="#333"/></svg>
<!-- nav arrows -->
<svg width="0" height="0" style="position:absolute"><defs><linearGradient id="gy" x1="0" y1="0" x2="0" y2="1"><stop offset="0" stop-color="#fff8a0"/><stop offset=".5" stop-color="#f8d830"/><stop offset="1" stop-color="#e0a810"/></linearGradient></defs></svg>
<svg class="a" style="left:731px;top:191px" width="24" height="23" viewBox="0 0 24 23"><rect x="1" y="1" width="2.2" height="20" fill="#f0f0f0" stroke="#444" stroke-width=".6"/><path d="M4.5 11 L12.5 3.5 V7.5 H21.5 V14.5 H12.5 V18.5Z" fill="url(#gy)" stroke="#6a5a10" stroke-width="1" stroke-linejoin="round"/><path d="M6 21 H21" stroke="#222" stroke-width="1.5" opacity=".35"/></svg>
<svg class="a" style="left:757px;top:191px" width="24" height="23" viewBox="0 0 24 23"><path d="M2 11 L10.5 3.5 V7.5 H21.5 V14.5 H10.5 V18.5Z" fill="url(#gy)" stroke="#6a5a10" stroke-width="1" stroke-linejoin="round"/><path d="M5 21 H21" stroke="#222" stroke-width="1.5" opacity=".35"/></svg>
<svg class="a" style="left:783px;top:191px" width="24" height="23" viewBox="0 0 24 23"><path d="M22 11 L13.5 3.5 V7.5 H2.5 V14.5 H13.5 V18.5Z" fill="url(#gy)" stroke="#6a5a10" stroke-width="1" stroke-linejoin="round"/><path d="M4 21 H20" stroke="#222" stroke-width="1.5" opacity=".35"/></svg>
<svg class="a" style="left:808px;top:191px" width="24" height="23" viewBox="0 0 24 23"><rect x="20.5" y="1" width="2.2" height="20" fill="#f0f0f0" stroke="#444" stroke-width=".6"/><path d="M19.5 11 L11.5 3.5 V7.5 H2.5 V14.5 H11.5 V18.5Z" fill="url(#gy)" stroke="#6a5a10" stroke-width="1" stroke-linejoin="round"/><path d="M3 21 H19" stroke="#222" stroke-width="1.5" opacity=".35"/></svg>
<!-- linked items -->
<div class="a" style="left:1151px;top:194px;width:105px;height:17px;border-radius:8px 0 0 8px;background:#3e3e3e"></div>
<div class="a" style="left:1167px;top:196px;font:bold 11.5px 'Liberation Sans',sans-serif;color:#b6bec6;white-space:nowrap">Linked Items</div>
<svg class="a" style="left:1248px;top:190px" width="24" height="23" viewBox="0 0 24 23"><path d="M1 4 H8 L11 1 V22 H1Z" fill="#3a3a3a" stroke="#999" stroke-width=".7"/><path d="M2 8 H9 M7 6 L9.5 8 L7 10 M2 16 H9 M7 14 L9.5 16 L7 18" stroke="#eee" stroke-width="1" fill="none"/><path d="M12 1 H19 L22 4 V13 H12Z" fill="#f4f8fc" stroke="#666" stroke-width=".8"/><path d="M10 9 H18 L21 12 V22 H10Z" fill="#e4eefa" stroke="#666" stroke-width=".8"/><path d="M14 2 V12 M12 10 V21" stroke="#e88" stroke-width=".6"/><path d="M21 22 L23 20 V11" stroke="#222" stroke-width="1" opacity=".5" fill="none"/></svg>

<!-- content area -->
<div class="a" style="left:353px;top:236px;width:918px;height:477px;background:#e8e8e8;border-left:1px solid #111;border-bottom:1px solid #111"></div>
<!-- header tab -->
<div class="a" style="left:377px;top:225px;width:63px;height:24px;background:linear-gradient(#fdfdfd,#ececec);border-radius:5px 5px 0 0;border-left:1px solid #222;border-right:1px solid #222"></div>
<div class="a" style="left:387px;top:227px;font:bold 11.5px 'Liberation Sans',sans-serif;color:#000">Header</div>
<!-- PO tab -->
<div class="a" style="left:1035px;top:229px;width:7px;height:7px;background:radial-gradient(circle at 0 0,transparent 6.5px,#f2f2f2 7.2px)"></div>
<div class="a" style="left:1226px;top:229px;width:7px;height:7px;background:radial-gradient(circle at 100% 0,transparent 6.5px,#f2f2f2 7.2px)"></div>
<div class="a" style="left:1042px;top:221px;width:184px;height:15px;background:linear-gradient(#fbfbfb,#f2f2f2);border-radius:7px 7px 0 0"></div>
<div class="a" style="left:1035px;top:236px;width:198px;height:1px;background:#ededed"></div>
<div class="a" style="left:1059px;top:224px;font:bold 15.1px 'Liberation Sans',sans-serif;color:#a4a4a4;white-space:nowrap">Purchase Order</div>
<div class="a" style="left:1182px;top:224px;width:1px;height:19px;background:#c4c4c4"></div>
<svg class="a" style="left:1192px;top:224px" width="20" height="20" viewBox="0 0 20 20"><circle cx="10" cy="10" r="9.3" fill="#76a84a"/><path d="M5.8 3 V10.5 A4.3 4.3 0 1 0 10.1 6.2" fill="none" stroke="#fff" stroke-width="2.6"/></svg>
<!-- subtab bar -->
<div class="a" style="left:371px;top:250px;width:883px;height:17px;background:#4a4a4a;border:1px solid #1e1e1e;border-radius:4px"></div>
<div class="a" style="left:387px;top:251px;font:11px 'Liberation Sans',sans-serif;color:#f0f0f0;white-space:nowrap">Lines</div>
<div class="a" style="left:419px;top:252px;width:1px;height:14px;background:#222;border-right:1px solid #666"></div>
<div class="a" style="left:426px;top:251px;font:11px 'Liberation Sans',sans-serif;color:#f0f0f0;white-space:nowrap">Tax</div>
<div class="a" style="left:449px;top:252px;width:1px;height:14px;background:#222;border-right:1px solid #666"></div>
<div class="a" style="left:455px;top:251px;font:11px 'Liberation Sans',sans-serif;color:#f0f0f0;white-space:nowrap">Discounts</div>
<div class="a" style="left:509px;top:252px;width:1px;height:14px;background:#222;border-right:1px solid #666"></div>
<div class="a" style="left:515px;top:251px;font:11px 'Liberation Sans',sans-serif;color:#f0f0f0;white-space:nowrap;letter-spacing:-0.25px">Payment</div>
<!-- line at top -->
<div class="a" style="left:519px;top:271px;width:714px;height:2px;border-top:1px solid #888;border-bottom:1px solid #fff"></div>
<div class="lb" style="right:772px;top:281px">Delivery notes</div><div class="a" style="left:519px;top:279px;width:715px;height:60px;background:#fff;border:1px solid #8a8a8a;border-right-color:#c0c0c0;border-bottom-color:#c0c0c0"></div><div class="lb lk" style="right:772px;top:347px"><svg class="ar" viewBox="0 0 6 8"><path d="M1.3 0.5 H6 V5.2 L4.6 3.8 C3.4 4.9 2.9 6.2 2.6 8 C0.9 6.6 0.9 4.4 3.1 2.3 Z" fill="#1f7ec4"/></svg>Transaction Document</div><div class="lb" style="right:772px;top:372px">Order Date</div><div class="lb lk" style="right:772px;top:397px"><svg class="ar" viewBox="0 0 6 8"><path d="M1.3 0.5 H6 V5.2 L4.6 3.8 C3.4 4.9 2.9 6.2 2.6 8 C0.9 6.6 0.9 4.4 3.1 2.3 Z" fill="#1f7ec4"/></svg>Business Partner</div><div class="lb lk" style="right:772px;top:422px"><svg class="ar" viewBox="0 0 6 8"><path d="M1.3 0.5 H6 V5.2 L4.6 3.8 C3.4 4.9 2.9 6.2 2.6 8 C0.9 6.6 0.9 4.4 3.1 2.3 Z" fill="#1f7ec4"/></svg>User/Contact</div><div class="lb lk" style="right:772px;top:447px"><svg class="ar" viewBox="0 0 6 8"><path d="M1.3 0.5 H6 V5.2 L4.6 3.8 C3.4 4.9 2.9 6.2 2.6 8 C0.9 6.6 0.9 4.4 3.1 2.3 Z" fill="#1f7ec4"/></svg>Price List</div><div class="lb lk" style="right:772px;top:472px"><svg class="ar" viewBox="0 0 6 8"><path d="M1.3 0.5 H6 V5.2 L4.6 3.8 C3.4 4.9 2.9 6.2 2.6 8 C0.9 6.6 0.9 4.4 3.1 2.3 Z" fill="#1f7ec4"/></svg>Warehouse</div><div class="lb lk" style="right:772px;top:497px"><svg class="ar" viewBox="0 0 6 8"><path d="M1.3 0.5 H6 V5.2 L4.6 3.8 C3.4 4.9 2.9 6.2 2.6 8 C0.9 6.6 0.9 4.4 3.1 2.3 Z" fill="#1f7ec4"/></svg>Company Agent</div><div class="lb" style="right:772px;top:522px">Form of Payment</div><div class="lb" style="right:772px;top:547px">null</div><div class="lb" style="right:337px;top:372px">Scheduled Delivery Date</div><div class="lb lk" style="right:337px;top:397px"><svg class="ar" viewBox="0 0 6 8"><path d="M1.3 0.5 H6 V5.2 L4.6 3.8 C3.4 4.9 2.9 6.2 2.6 8 C0.9 6.6 0.9 4.4 3.1 2.3 Z" fill="#1f7ec4"/></svg>Invoice From</div><div class="lb lk" style="right:337px;top:472px"><svg class="ar" viewBox="0 0 6 8"><path d="M1.3 0.5 H6 V5.2 L4.6 3.8 C3.4 4.9 2.9 6.2 2.6 8 C0.9 6.6 0.9 4.4 3.1 2.3 Z" fill="#1f7ec4"/></svg>Currency</div><div class="lb" style="right:337px;top:497px">Print Discount</div><div class="lb lk" style="right:337px;top:522px"><svg class="ar" viewBox="0 0 6 8"><path d="M1.3 0.5 H6 V5.2 L4.6 3.8 C3.4 4.9 2.9 6.2 2.6 8 C0.9 6.6 0.9 4.4 3.1 2.3 Z" fill="#1f7ec4"/></svg>Payment Terms</div><div class="fld " style="left:519px;top:345px;width:280px">Purchase Order<div class="dd"></div></div><div class="fld" style="left:519px;top:370px;width:110px;font-size:11px;background:linear-gradient(#fff3c8,#fff8e0)">06-08-2009</div><div class="fld" style="left:954px;top:370px;width:110px;font-size:11px;background:linear-gradient(#fff3c8,#fff8e0)">06-08-2009</div><div class="fld" style="left:519px;top:395px;width:255px;border:2px solid #3d8fd0;background:linear-gradient(#b0ddf0,#fff6d0);padding:0 0 0 4px;letter-spacing:-0.45px">SEUR MENSAJEROS<span style="display:inline-block;width:1px;height:12px;background:#000;vertical-align:-2px"></span></div><div class="fld " style="left:954px;top:395px;width:280px">.ALICANTE, CTRA. MADRID PLA DE LA VALLONG<div class="dd"></div></div><div class="fld wh" style="left:519px;top:420px;width:280px"><div class="dd"></div></div><div class="fld " style="left:519px;top:445px;width:280px">a<div class="dd"></div></div><div class="fld " style="left:519px;top:470px;width:280px">almacen 1<div class="dd"></div></div><div class="fld ro" style="left:954px;top:470px;width:280px"><b style="color:#555">EUR</b><div class="dd"></div></div><div class="fld wh" style="left:519px;top:495px;width:280px"><div class="dd"></div></div><div class="a" style="left:956px;top:495px;width:13px;height:13px;border:1px solid #8a8a8a;border-radius:3px;background:linear-gradient(#f4f4f4,#dcdcdc)"></div><div class="fld " style="left:519px;top:520px;width:135px">On Credit<div class="dd"></div></div><div class="fld " style="left:954px;top:520px;width:280px">33<div class="dd"></div></div><div class="fld " style="left:519px;top:545px;width:280px">Carriage and Insurance Paid to<div class="dd"></div></div><svg class="a" style="left:628px;top:367px" width="28" height="21" viewBox="0 0 28 21"><defs><linearGradient id="gb628" x1="0" y1="0" x2="0" y2="1"><stop offset="0" stop-color="#f4fff0"/><stop offset=".45" stop-color="#a8e088"/><stop offset=".5" stop-color="#5cc028"/><stop offset="1" stop-color="#8ae860"/></linearGradient></defs><path d="M0.5 3.5 H18 A8 8 0 0 1 18 19.5 H0.5Z" fill="url(#gb628)" stroke="#3a9a10" stroke-width="1"/><rect x="3.5" y="4" width="17" height="13" fill="#eef4fc" stroke="#666" stroke-width=".8"/><rect x="3" y="1" width="18" height="3.5" fill="#d83010"/><path d="M3.5 11 C5 15 8 17 11 17 H3.5Z" fill="#d8dce8"/><text x="6" y="14.5" font-family="Liberation Serif" font-size="11" fill="#222">31</text></svg><svg class="a" style="left:1063px;top:367px" width="28" height="21" viewBox="0 0 28 21"><defs><linearGradient id="gb1063" x1="0" y1="0" x2="0" y2="1"><stop offset="0" stop-color="#f4fff0"/><stop offset=".45" stop-color="#a8e088"/><stop offset=".5" stop-color="#5cc028"/><stop offset="1" stop-color="#8ae860"/></linearGradient></defs><path d="M0.5 3.5 H18 A8 8 0 0 1 18 19.5 H0.5Z" fill="url(#gb1063)" stroke="#3a9a10" stroke-width="1"/><rect x="3.5" y="4" width="17" height="13" fill="#eef4fc" stroke="#666" stroke-width=".8"/><rect x="3" y="1" width="18" height="3.5" fill="#d83010"/><path d="M3.5 11 C5 15 8 17 11 17 H3.5Z" fill="#d8dce8"/><text x="6" y="14.5" font-family="Liberation Serif" font-size="11" fill="#222">31</text></svg><svg class="a" style="left:773px;top:393px" width="28" height="20" viewBox="0 0 28 20"><defs><linearGradient id="gbp" x1="0" y1="0" x2="0" y2="1"><stop offset="0" stop-color="#f4fff0"/><stop offset=".45" stop-color="#a8e088"/><stop offset=".5" stop-color="#5cc028"/><stop offset="1" stop-color="#8ae860"/></linearGradient></defs><path d="M0.5 2.5 H18.5 A8.2 8.2 0 0 1 18.5 18.5 H0.5Z" fill="url(#gbp)" stroke="#3a9a10" stroke-width="1"/><path d="M5 16 C5 11 15 11 15 16Z" fill="#8a3a08"/><circle cx="12" cy="8" r="4.5" fill="#f8c0b0"/><path d="M7.5 7 C7.5 2 16 1.5 16.5 6 C14 4.5 10 5 7.5 7Z" fill="#111"/><rect x="14.5" y="10" width="9" height="7.5" fill="#c89860" stroke="#5a3a10" stroke-width=".6"/><path d="M16.5 10 V8 H21.5 V10" fill="none" stroke="#222" stroke-width="1"/></svg><div class="a" style="left:371px;top:576px;width:83px;height:18px;border-radius:9px;background:#858585"></div><div class="a" style="left:383px;top:578px;font:bold 11.8px 'Liberation Sans',sans-serif;color:#fff">Reference</div><div class="a" style="left:454px;top:584px;width:787px;height:2px;background:#7a7a7a"></div><div class="lb" style="right:772px;top:608px">Incoterms</div><div class="fld wh" style="left:519px;top:606px;width:280px"><div class="dd"></div></div><div class="lb" style="right:772px;top:633px;letter-spacing:-0.25px">INCOTERMS description</div><div class="a" style="left:519px;top:631px;width:280px;height:60px;background:#fff;border:1px solid #8a8a8a;border-right-color:#c0c0c0;border-bottom-color:#c0c0c0"></div><div class="a" style="left:371px;top:703px;width:62px;height:18px;border-radius:9px;background:#858585;clip-path:inset(0 0 8px 0)"></div><div class="a" style="left:383px;top:705px;font:bold 11.8px 'Liberation Sans',sans-serif;color:#fff;clip-path:inset(0 0 6px 0)">Status</div><div class="a" style="left:1256px;top:270px;width:15px;height:442px;background:#e8e8e8"></div>
<svg class="a" style="left:1257px;top:274px" width="13" height="9"><path d="M2.5 6.5 L6.5 2.5 L10.5 6.5" fill="none" stroke="#000" stroke-width="2.2"/></svg>
<div class="a" style="left:1256px;top:286px;width:14px;height:396px;background:linear-gradient(90deg,#bcbcbc,#d4d4d4 60%,#c8c8c8);border-radius:7px"></div>
<div class="a" style="left:1256px;top:338px;width:14px;height:265px;background:linear-gradient(90deg,#e0e0e0,#f0f0f0 35%,#e6e6e6);border-radius:7px;box-shadow:inset 0 0 0 1px #d2d2d2"></div>
<div class="a" style="left:1261px;top:477px;width:5px;height:1px;background:#999;box-shadow:0 2px 0 #999,0 4px 0 #999"></div>
<svg class="a" style="left:1257px;top:687px" width="13" height="9"><path d="M2.5 6.5 L6.5 2.5 L10.5 6.5" fill="none" stroke="#000" stroke-width="2.2"/></svg>
<svg class="a" style="left:1257px;top:700px" width="13" height="9"><path d="M2.5 2.5 L6.5 6.5 L10.5 2.5" fill="none" stroke="#000" stroke-width="2.2"/></svg>
<div class="a" style="left:1271px;top:236px;width:1px;height:477px;background:#111"></div>

<!-- status bar -->
<div class="a" style="left:0;top:721px;width:1280px;height:24px;background:#e9e9e9"></div>
<div class="a ff" style="left:8px;top:724px">Terminado</div>
</body></html>
